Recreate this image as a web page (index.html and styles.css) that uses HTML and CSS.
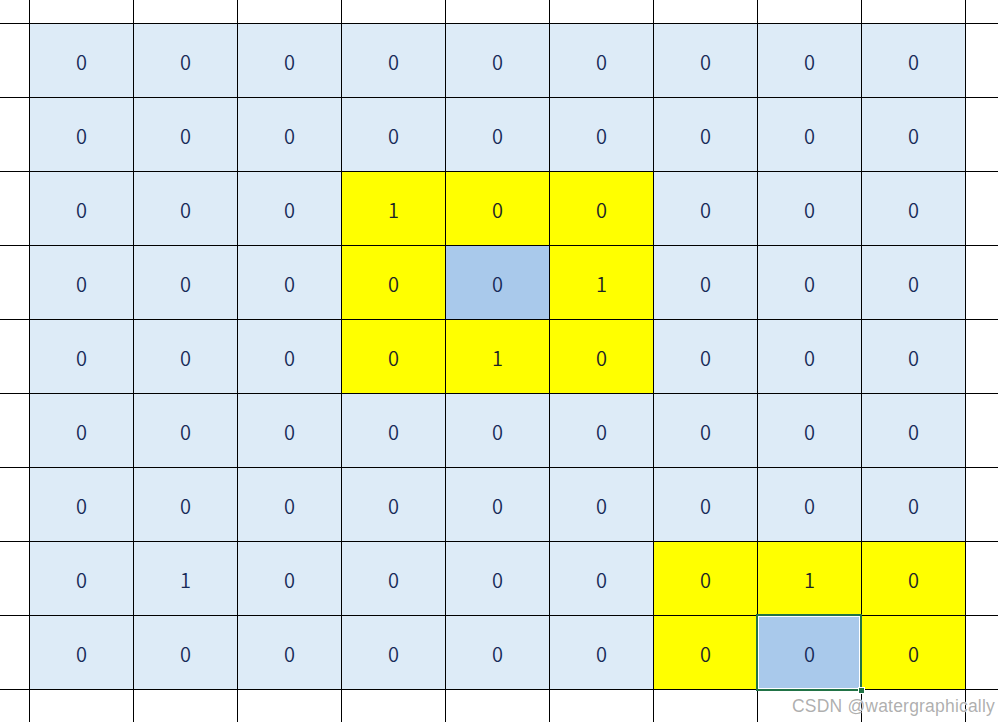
FILE: index.html
```
<!DOCTYPE html>
<html>
<head>
<meta charset="utf-8">
<link rel="stylesheet" href="styles.css">
</head>
<body>
<div class="sheet">
<div class="e"></div><div class="e"></div><div class="e"></div><div class="e"></div><div class="e"></div><div class="e"></div><div class="e"></div><div class="e"></div><div class="e"></div><div class="e"></div><div class="e"></div>

<div class="e"></div><div class="c">0</div><div class="c">0</div><div class="c">0</div><div class="c">0</div><div class="c">0</div><div class="c">0</div><div class="c">0</div><div class="c">0</div><div class="c">0</div><div class="e"></div>

<div class="e"></div><div class="c">0</div><div class="c">0</div><div class="c">0</div><div class="c">0</div><div class="c">0</div><div class="c">0</div><div class="c">0</div><div class="c">0</div><div class="c">0</div><div class="e"></div>

<div class="e"></div><div class="c">0</div><div class="c">0</div><div class="c">0</div><div class="y">1</div><div class="y">0</div><div class="y">0</div><div class="c">0</div><div class="c">0</div><div class="c">0</div><div class="e"></div>

<div class="e"></div><div class="c">0</div><div class="c">0</div><div class="c">0</div><div class="y">0</div><div class="s">0</div><div class="y">1</div><div class="c">0</div><div class="c">0</div><div class="c">0</div><div class="e"></div>

<div class="e"></div><div class="c">0</div><div class="c">0</div><div class="c">0</div><div class="y">0</div><div class="y">1</div><div class="y">0</div><div class="c">0</div><div class="c">0</div><div class="c">0</div><div class="e"></div>

<div class="e"></div><div class="c">0</div><div class="c">0</div><div class="c">0</div><div class="c">0</div><div class="c">0</div><div class="c">0</div><div class="c">0</div><div class="c">0</div><div class="c">0</div><div class="e"></div>

<div class="e"></div><div class="c">0</div><div class="c">0</div><div class="c">0</div><div class="c">0</div><div class="c">0</div><div class="c">0</div><div class="c">0</div><div class="c">0</div><div class="c">0</div><div class="e"></div>

<div class="e"></div><div class="c">0</div><div class="c">1</div><div class="c">0</div><div class="c">0</div><div class="c">0</div><div class="c">0</div><div class="y">0</div><div class="y">1</div><div class="y">0</div><div class="e"></div>

<div class="e"></div><div class="c">0</div><div class="c">0</div><div class="c">0</div><div class="c">0</div><div class="c">0</div><div class="c">0</div><div class="y">0</div><div class="s active">0<span class="handle"></span></div><div class="y">0</div><div class="e"></div>

<div class="e"></div><div class="e"></div><div class="e"></div><div class="e"></div><div class="e"></div><div class="e"></div><div class="e"></div><div class="e"></div><div class="e"></div><div class="e"></div><div class="e"></div>
</div>
<div class="watermark">CSDN @watergraphically</div>
</body>
</html>
```
FILE: styles.css
```
html, body {
  margin: 0;
  padding: 0;
  width: 998px;
  height: 722px;
  overflow: hidden;
  background: #000;
}
.sheet {
  display: grid;
  grid-template-columns: 29px repeat(9, 103px) 32px;
  grid-template-rows: 23px repeat(9, 73px) 32px;
  gap: 1px;
  background: #000;
  width: 998px;
  height: 722px;
  font-family: "Noto Sans CJK SC", "Noto Sans", sans-serif;
  font-size: 20px;
  font-weight: 350;
  color: #172a58;
}
.sheet > div {
  display: flex;
  align-items: center;
  justify-content: center;
  padding-top: 3px;
  box-sizing: border-box;
  line-height: 1;
}
.e { background: #fff; }
.c { background: #ddebf7; }
.y { background: #ffff00; color: #1a2428; }
.s { background: #a9c9eb; }
.active { position: relative; }
.active::after {
  content: "";
  position: absolute;
  top: -2px;
  left: -2px;
  right: -1px;
  bottom: -2px;
  border: 2px solid #217346;
  box-shadow: inset 0 0 0 1px #fff;
  pointer-events: none;
}
.handle {
  position: absolute;
  right: -4px;
  bottom: -5px;
  width: 5px;
  height: 5px;
  background: #217346;
  border: 1px solid #fff;
  z-index: 2;
}
.watermark {
  position: absolute;
  right: 3px;
  bottom: 5px;
  font-family: "Liberation Sans", Arial, sans-serif;
  font-size: 17.5px;
  color: rgba(140, 140, 140, 0.7);
  text-shadow: 0 0 1px #fff, 0 0 1px #fff;
  letter-spacing: 0.2px;
}
```
